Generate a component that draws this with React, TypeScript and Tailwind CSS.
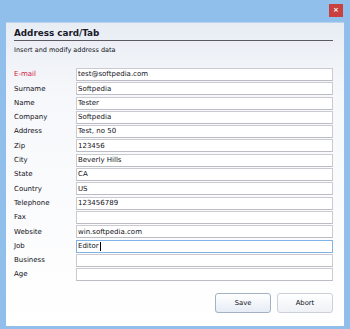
import React from "react";

const fields: { label: string; value: string; focus?: boolean; red?: boolean }[] = [
  { label: "E-mail", value: "test@softpedia.com", red: true },
  { label: "Surname", value: "Softpedia" },
  { label: "Name", value: "Tester" },
  { label: "Company", value: "Softpedia" },
  { label: "Address", value: "Test, no 50" },
  { label: "Zip", value: "123456" },
  { label: "City", value: "Beverly Hills" },
  { label: "State", value: "CA" },
  { label: "Country", value: "US" },
  { label: "Telephone", value: "123456789" },
  { label: "Fax", value: "" },
  { label: "Website", value: "win.softpedia.com" },
  { label: "Job", value: "Editor", focus: true },
  { label: "Business", value: "" },
  { label: "Age", value: "" },
];

export default function App() {
  return (
    <div
      className="w-[350px] h-[329px] bg-[#8fbfea] flex flex-col text-[#111118]"
      style={{ fontFamily: '"DejaVu Sans", Tahoma, sans-serif' }}
    >
      {/* title bar */}
      <div className="h-[22px] flex justify-end items-start pt-[4px] pr-[7px]">
        <button className="w-[14px] h-[13px] bg-[#c9403f] text-white text-[7px] font-bold flex items-center justify-center">
          ×
        </button>
      </div>

      {/* client area */}
      <div className="mx-[6px] mb-[3px] flex-1 border-t border-[#b9d4ee] bg-gradient-to-b from-[#e8edf4] via-[#f7f8fb] via-[25%] to-white flex flex-col pl-[8px] pr-[11px]">
        <div className="pt-[4px] text-[8.8px] font-bold leading-[12px] text-[#1a1a2a]">Address card/Tab</div>
        <div className="h-[1px] bg-[#5a5a60] mt-[1px]"></div>
        <div className="text-[6.5px] leading-[10px] mt-[4px]">Insert and modify address data</div>

        <div className="grid grid-cols-[62px_1fr] auto-rows-[13px] gap-y-[1.3px] mt-[13px] text-[7px]">
          {fields.map((f) => (
            <React.Fragment key={f.label}>
              <div className={`flex items-center ${f.red ? "text-[#d3203c]" : ""}`}>{f.label}</div>
              <div
                className={`bg-white border flex items-center pl-[1px] ${
                  f.focus
                    ? "border-[#80b4e6]"
                    : "border-[#cacad0] border-b-[#bcbcc4]"
                }`}
              >
                {f.value}
                {f.focus && <span className="w-[1px] h-[9px] bg-black ml-[1px]"></span>}
              </div>
            </React.Fragment>
          ))}
        </div>

        <div className="flex justify-end gap-[6px] mt-[12px]">
          <button className="w-[56px] h-[20px] rounded-[3px] border border-[#a4b0c4] bg-gradient-to-b from-white to-[#e6ecf6] text-[6.8px]">
            Save
          </button>
          <button className="w-[56px] h-[20px] rounded-[3px] border border-[#cbd0da] bg-gradient-to-b from-white to-[#eef1f6] text-[6.8px]">
            Abort
          </button>
        </div>
      </div>
    </div>
  );
}
